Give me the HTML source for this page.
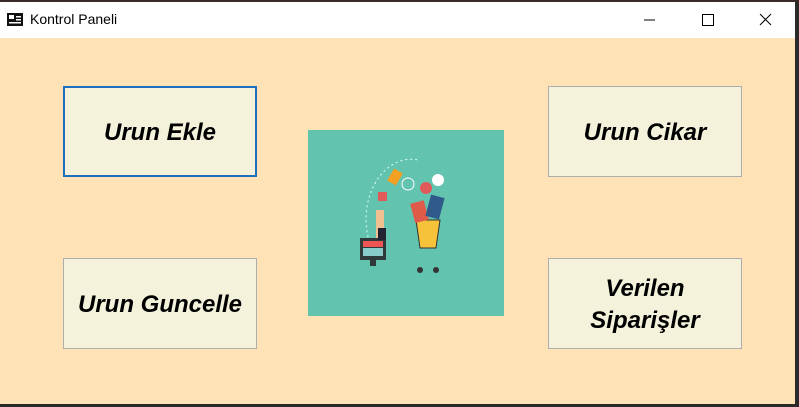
<!DOCTYPE html>
<html><head><style>
body{margin:0;width:799px;height:407px;background:#2a2a2a;position:relative;overflow:hidden;font-family:"Liberation Sans",sans-serif}
#top{position:absolute;left:0;top:0;width:799px;height:2px;background:#3a2a2a}
#win{position:absolute;left:0;top:2px;width:795px;height:402px;background:#ffe2b5}
#tb{position:absolute;left:0;top:0;width:795px;height:36px;background:#fff}
#tb .t{position:absolute;left:30px;top:9px;font-size:14px;color:#000}
.btn{position:absolute;width:192px;height:89px;background:#f5f2dc;border:1px solid #adadad;display:flex;align-items:center;justify-content:center;text-align:center;font-weight:bold;font-style:italic;font-size:24px;color:#000;line-height:32px;font-family:"Liberation Sans",sans-serif;padding-top:3px;box-sizing:content-box;height:86px}
.sel{border:2px solid #1e6fc0;width:190px;height:84px}
#img{position:absolute;left:308px;top:128px;width:196px;height:186px;background:#62c3ae}
</style></head><body>
<div id="top"></div>
<div id="win">
<div id="tb">
<svg style="position:absolute;left:7px;top:11px" width="16" height="13"><rect x="0" y="0" width="16" height="13" fill="#111"/><rect x="2" y="2" width="5" height="4" fill="#fff"/><rect x="9" y="3" width="5" height="1.5" fill="#fff"/><rect x="9" y="6" width="5" height="1.5" fill="#fff"/><rect x="2" y="9" width="12" height="1.5" fill="#fff"/></svg>
<div class="t">Kontrol Paneli</div>
<svg style="position:absolute;left:640px;top:10px" width="140" height="16"><line x1="4" y1="8" x2="15" y2="8" stroke="#000"/><rect x="62.5" y="2.5" width="11" height="11" fill="none" stroke="#000"/><path d="M120 2L131 13M131 2L120 13" stroke="#000"/></svg>
</div>
<div class="btn sel" style="left:63px;top:84px">Urun Ekle</div>
<div class="btn" style="left:548px;top:84px">Urun Cikar</div>
<div class="btn" style="left:63px;top:256px">Urun Guncelle</div>
<div class="btn" style="left:548px;top:256px">Verilen<br>Siparişler</div>
<div id="img">
<svg width="196" height="186">
<path d="M70 130 A45 60 0 0 1 110 30" fill="none" stroke="#dff" stroke-width="1" stroke-dasharray="2 3"/>
<rect x="52" y="108" width="26" height="22" fill="#2f3b3a"/><rect x="55" y="111" width="20" height="6" fill="#e55"/><rect x="55" y="118" width="20" height="8" fill="#8cc"/>
<rect x="62" y="130" width="6" height="6" fill="#2f3b3a"/>
<rect x="68" y="80" width="8" height="28" fill="#f0c090"/><rect x="70" y="98" width="8" height="12" fill="#223"/>
<path d="M108 90 L132 90 L128 118 L112 118 Z" fill="#f5c23a" stroke="#333"/>
<circle cx="112" cy="140" r="3" fill="#333"/><circle cx="128" cy="140" r="3" fill="#333"/>
<rect x="104" y="72" width="14" height="20" fill="#e05a4a" transform="rotate(-15 110 80)"/>
<rect x="120" y="66" width="14" height="22" fill="#2f5a8a" transform="rotate(15 127 77)"/>
<circle cx="118" cy="58" r="6" fill="#e05a5a"/><circle cx="100" cy="54" r="6" fill="none" stroke="#fff"/>
<circle cx="130" cy="50" r="6" fill="#fff"/><rect x="82" y="40" width="10" height="14" fill="#f5a020" transform="rotate(30 87 47)"/>
<rect x="70" y="62" width="9" height="9" fill="#e05a5a"/>
</svg>
</div>
</div>
</body></html>
